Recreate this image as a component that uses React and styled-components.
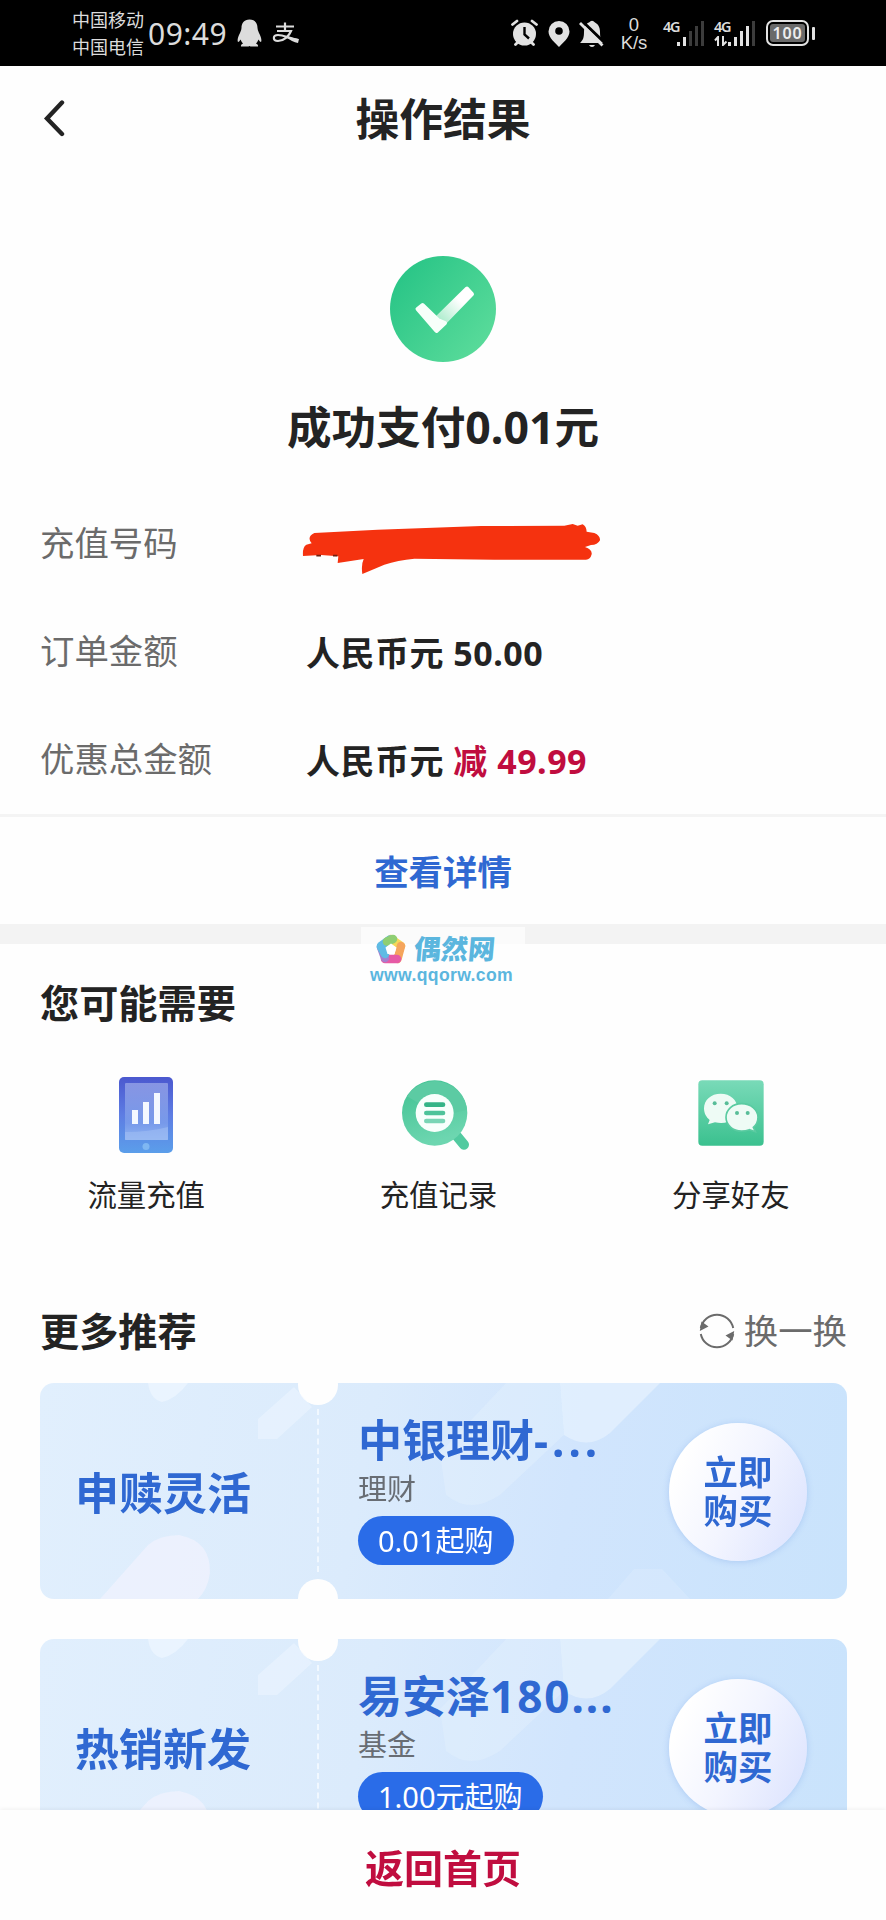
import React from "react";
import styled, { createGlobalStyle, css } from "styled-components";

const blue = "#2f68d2";
const red = "#c00d3f";
const dark = "#232323";
const gray = "#6b6b6b";

const GlobalStyle = createGlobalStyle`
  * {
    box-sizing: border-box;
  }

  body {
    margin: 0;
    background: #fff;
    font-family: "Noto Sans", "Noto Sans CJK SC", sans-serif;
  }

  svg {
    display: block;
    flex: none;
  }

  h1, h2, p {
    margin: 0;
  }

  button {
    font-family: inherit;
    border: none;
    padding: 0;
    background: none;
  }
`;

const Page = styled.div`
  display: flex;
  flex-direction: column;
  width: 886px;
  height: 1920px;
  overflow: hidden;
  background: #fefefe;
  color: ${dark};
`;

const StatusBar = styled.div`
  display: flex;
  justify-content: space-between;
  align-items: center;
  height: 66px;
  flex: none;
  padding: 0 71px 0 72px;
  background: #000;
  color: #dcdcdc;
`;

const StatusGroup = styled.div`
  display: flex;
  align-items: center;
`;

const Carriers = styled.div`
  width: 76px;
  font-size: 18px;
  line-height: 27px;
  padding-top: 1px;
  white-space: nowrap;
`;

const Clock = styled.div`
  width: 89px;
  font-size: 30px;
  line-height: 40px;
  padding-top: 2px;
  letter-spacing: 0.5px;
`;

const AppIcons = styled.div`
  display: flex;
  align-items: center;
  gap: 10px;
`;

const Header = styled.header`
  display: grid;
  grid-template-columns: 1fr auto 1fr;
  align-items: center;
  height: 106px;
  flex: none;
  padding: 0 43px;
`;

const Title = styled.h1`
  font-size: 43.8px;
  line-height: 60px;
  font-weight: 700;
`;

const Result = styled.section`
  display: flex;
  flex-direction: column;
  align-items: center;
  gap: 35px;
  padding: 84px 0 32px;
`;

const ResultText = styled.p`
  font-size: 44.6px;
  line-height: 60px;
  font-weight: 700;
`;

const Row = styled.div`
  display: grid;
  grid-template-columns: 266px 1fr;
  align-items: center;
  height: 108px;
  flex: none;
  padding-left: 40px;
  font-size: 34.4px;
  line-height: 48px;
`;

const Label = styled.div`
  color: ${gray};
`;

const Value = styled.div`
  font-weight: 700;
  font-size: 34px;
  padding-top: 3px;
  letter-spacing: 0.5px;

  span {
    color: ${red};
  }
`;

const Redacted = styled.div`
  margin-left: -5px;
  padding-top: 12px;
`;

const DetailLink = styled.button`
  height: 110px;
  margin-top: 1px;
  padding-top: 3px;
  flex: none;
  border-top: 3px solid #f4f4f4;
  color: ${blue};
  font-size: 34.4px;
  line-height: 48px;
  font-weight: 600;
`;

const Band = styled.div`
  position: relative;
  height: 20px;
  flex: none;
  background: #f3f3f3;
`;

const SiteMark = styled.div`
  position: absolute;
  z-index: 1;
  top: 3px;
  left: 361px;
  width: 164px;
  height: 64px;
  background: rgba(254, 254, 254, 0.75);
  color: #5bb6de;
`;

const SiteName = styled.div`
  display: flex;
  align-items: center;
  gap: 8px;
  height: 37px;
  padding: 7px 0 0 15px;
  font-size: 27px;
  line-height: 30px;
  font-weight: 900;

  span {
    transform: skewX(-5deg);
  }
`;

const SiteUrl = styled.div`
  padding-left: 9px;
  font-family: "Liberation Sans", sans-serif;
  font-size: 17.6px;
  line-height: 22px;
  font-weight: 700;
  letter-spacing: 0.35px;
`;

const SectionHead = styled.div`
  display: flex;
  justify-content: space-between;
  align-items: center;
  height: 60px;
  flex: none;
  margin-top: ${({ $top }) => $top}px;
  padding: 0 39px 0 40px;
`;

const SectionTitle = styled.h2`
  font-size: 39.2px;
  line-height: 60px;
  font-weight: 700;
`;

const Shuffle = styled.button`
  display: flex;
  align-items: center;
  gap: 9px;
  color: ${gray};
  font-size: 34.4px;
  line-height: 48px;
`;

const Shortcuts = styled.div`
  display: grid;
  grid-template-columns: repeat(3, 1fr);
  flex: none;
  padding: 42px 9px 0 0;
`;

const Shortcut = styled.div`
  display: flex;
  flex-direction: column;
  align-items: center;
  gap: 20px;
  font-size: 29.4px;
  line-height: 40px;
`;

const IconBox = styled.div`
  display: flex;
  align-items: center;
  height: 80px;
  padding: 0 ${({ $right }) => $right}px ${({ $bottom }) => $bottom}px 0;
`;

const Cards = styled.div`
  display: flex;
  flex-direction: column;
  gap: 40px;
  flex: 1;
  min-height: 0;
  overflow: hidden;
  padding: 22px 39px 0 40px;
`;

const notch = css`
  content: "";
  position: absolute;
  left: 258px;
  width: 40px;
  height: 40px;
  border-radius: 50%;
  background: #fefefe;
`;

const Card = styled.article`
  position: relative;
  display: flex;
  height: 216px;
  flex: none;
  border-radius: 14px;
  overflow: hidden;
  background: linear-gradient(100deg, #e1effd 0%, #dbebfc 40%, #d1e5fd 65%, #c9e3fc 100%);

  &::before {
    ${notch};
    top: -18px;
  }

  &::after {
    ${notch};
    bottom: -20px;
  }
`;

const Shapes = styled.svg`
  position: absolute;
  inset: 0;
`;

const Slogan = styled.div`
  position: relative;
  display: flex;
  align-items: center;
  width: 279px;
  margin: 26px 0 27px;
  padding: 1px 0 0 35px;
  border-right: 2px dashed #f1f8ff;
  color: ${blue};
  font-size: 44px;
  font-weight: 700;
`;

const Product = styled.div`
  position: relative;
  flex: 1;
  padding: 27px 0 0 39px;
`;

const ProductName = styled.div`
  color: ${blue};
  font-size: 44px;
  line-height: 60px;
  font-weight: 700;
  white-space: nowrap;

  span {
    letter-spacing: ${({ $spacing }) => $spacing}px;
  }
`;

const ProductType = styled.div`
  color: #686d74;
  font-size: 29px;
  line-height: 38px;
`;

const Pill = styled.div`
  display: inline-flex;
  align-items: center;
  height: 49px;
  margin-top: 8px;
  padding: 0 20px;
  border-radius: 25px;
  background: #2a6ce8;
  color: #fff;
  font-size: 29px;
  line-height: 49px;
`;

const BuyButton = styled.button`
  position: relative;
  align-self: center;
  width: 138px;
  height: 138px;
  margin: 2px 40px 0 0;
  padding: 0 34px 3px;
  border-radius: 50%;
  background: linear-gradient(115deg, #fff 15%, #f3f5ff 50%, #dce3fe 95%);
  box-shadow: 0 1px 6px rgba(80, 130, 220, 0.25);
  color: ${blue};
  font-size: 34.4px;
  line-height: 39px;
  font-weight: 600;
`;

const Footer = styled.footer`
  display: flex;
  justify-content: center;
  align-items: center;
  height: 110px;
  flex: none;
  padding-top: 5px;
  background: #fefefe;
  box-shadow: 0 -1px 4px rgba(0, 0, 0, 0.06);
  z-index: 1;
  color: ${red};
  font-size: 39px;
  line-height: 54px;
  font-weight: 700;
`;

const PenguinIcon = () => (
  <svg width="25" height="28" viewBox="0 0 25 28" fill="#dcdcdc">
    <path d="M12.500 0.500C7 0.500 4.500 4.500 4.500 9Q4.500 11 3 14C1 18 0 21 1 23Q2 23 3.500 20.500Q4.500 23 6 24.500Q3.500 25.500 4 27.500H11.500L12.500 27L13.500 27.500H21Q21.500 25.500 19 24.500Q20.500 23 21.500 20.500Q23 23 24 23C25 21 24 18 22 14Q20.500 11 20.500 9C20.500 4.500 18 0.500 12.500 0.500Z" />
  </svg>
);

const AlipayIcon = () => (
  <svg width="28" height="22" viewBox="0 0 28 22" fill="none" stroke="#dcdcdc" strokeWidth="2.2">
    <path d="M4 4.500H22M13 0.500V9M5 9H19C17 14 12 19 6 19C0.500 19 0.500 13 6 13C12 13 17 16.500 26 18" />
    <path d="M14 14Q20 16 27 17L26 21Q20 20 14 15Z" fill="#dcdcdc" stroke="none" />
  </svg>
);

// alarm, location, muted bell
const NoticeIcons = () => (
  <svg width="100" height="36" viewBox="0 0 100 36" fill="#e2e2e2">
    <circle cx="13.500" cy="19" r="11.500" />
    <path d="M1.500 9.500L6 6M21 6L25.500 9.500M4.500 29.500L8 26M22.500 29.500L19 26" stroke="#e2e2e2" strokeWidth="2.800" strokeLinecap="round" />
    <path d="M13.500 12V19.500L18 23.500" fill="none" stroke="#000" strokeWidth="2.400" />
    <path d="M48 6A10.500 10.500 0 0 0 37.500 16.500C37.500 23 44.500 28 48 32C51.500 28 58.500 23 58.500 16.500A10.500 10.500 0 0 0 48 6Z" />
    <circle cx="48" cy="16" r="3.800" fill="#000" />
    <path d="M69 28C72 25 73 23 73 17C73 11 76 8 78 7.500Q81 4 84 7.500C87 9 89 12 89 17C89 23 90 25 93 28Z" />
    <path d="M78 30H84Q83 32 81 32Q79 32 78 30Z" />
    <path d="M70 5L95 29" stroke="#000" strokeWidth="3" />
    <path d="M69 8L91.500 30.500" stroke="#e2e2e2" strokeWidth="2.800" />
  </svg>
);

const Speed = styled.div`
  display: flex;
  flex-direction: column;
  align-items: center;
  width: 44px;
  margin: 2px 7px 0 1px;
  font-family: "Liberation Sans", sans-serif;
  font-size: 18.5px;
  line-height: 18px;
`;

const NetworkType = styled.div`
  height: 12px;
  font-size: 14.5px;
  line-height: 12px;
  font-weight: 600;
  letter-spacing: -1.2px;
`;

const Signal = styled.div`
  display: flex;
  width: 50px;
  height: 26px;
  margin-right: 1px;
`;

const NetworkColumn = styled.div`
  display: flex;
  flex-direction: column;
  justify-content: space-between;
  width: 14px;
`;

const Bars = styled.div`
  display: flex;
  align-items: flex-end;
  gap: 3px;
  height: 26px;
`;

const Bar = styled.div`
  width: 3px;
  height: ${({ $height }) => $height}px;
  background: ${({ $on }) => ($on ? "#e2e2e2" : "#3c3c3c")};
`;

const Battery = styled.div`
  display: flex;
  align-items: center;
  gap: 3px;
  margin-left: 1px;

  &::after {
    content: "";
    width: 3px;
    height: 13px;
    border-radius: 1px;
    background: #e2e2e2;
  }
`;

const BatteryCell = styled.div`
  width: 43px;
  height: 26px;
  border: 2px solid #e2e2e2;
  border-radius: 7px;
  padding: 2px;
`;

const BatteryLevel = styled.div`
  height: 18px;
  border-radius: 3px;
  background: #6a6a6a;
  color: #ededed;
  font-size: 16px;
  line-height: 18px;
  font-weight: 600;
  letter-spacing: 0.8px;
  text-align: center;
`;

const TransferIcon = () => (
  <svg width="14" height="10" viewBox="0 0 14 10" fill="none" stroke="#e2e2e2" strokeWidth="2">
    <path d="M1 4.500L4 1V10M9 0V9L12.500 5.500" />
  </svg>
);

const BackIcon = () => (
  <svg width="22" height="40" viewBox="0 0 22 40" fill="none">
    <path d="M19 3.500L4 19.500L19 35" stroke={dark} strokeWidth="4.400" strokeLinecap="round" />
  </svg>
);

const SuccessIcon = () => (
  <svg width="106" height="106" viewBox="0 0 106 106">
    <defs>
      <linearGradient id="success" x1="0" y1="0.100" x2="1" y2="0.900">
        <stop offset="0" stopColor="#25c385" />
        <stop offset="1" stopColor="#5edd9c" />
      </linearGradient>
      <linearGradient id="tick" x1="48" y1="66" x2="72" y2="42" gradientUnits="userSpaceOnUse">
        <stop offset="0" stopColor="#a5ebc8" />
        <stop offset="0.900" stopColor="#fff" />
      </linearGradient>
    </defs>
    <circle cx="53" cy="53" r="53" fill="url(#success)" />
    <g strokeWidth="4" strokeLinejoin="round">
      <path d="M47 62L77 32.500L82 38L53 68Z" fill="url(#tick)" stroke="url(#tick)" />
      <path d="M27.500 53L32.500 49L48 64L55 67L46.500 75Z" fill="#f7fffa" stroke="#f7fffa" />
    </g>
  </svg>
);

const Scribble = () => (
  <svg width="300" height="52" viewBox="120 850 900 156">
    <path
      d="M160 880L350 870L660 859L910 858L935 853L950 858L965 854Q976 860 977 876L1000 880Q1018 888 1017 902Q1010 916 990 916L972 922Q994 930 992 944Q988 960 975 960H700L460 957Q410 962 370 975L304 1003Q300 975 308 958L230 970L232 950L180 946L126 949Q124 922 136 915L152 911Q136 892 160 880Z"
      fill="#f5320f"
    />
    <path d="M166 948h14M216 948h13" stroke="#702010" strokeWidth="5" />
  </svg>
);

const PentagonLogo = () => (
  <svg width="30" height="30" viewBox="0 0 30 30" fill="none" strokeWidth="8.5" strokeLinecap="round">
    <path d="M15 5L25 12" stroke="#f5d858" />
    <path d="M25 12L21.500 25" stroke="#f5a55c" />
    <path d="M21 25H9" stroke="#e65aa5" />
    <path d="M9 24L5 13" stroke="#a57fce" />
    <path d="M5 13L9 20" stroke="#5fbbe4" />
    <path d="M5 12L14 5.500" stroke="#5fbbe4" />
    <path d="M11 7.500L17 5" stroke="#8fce72" />
    <path d="M15 9.500L20.500 13.500L18.500 20H11.500L9.500 13.500Z" fill="#fff" />
  </svg>
);

const PhoneIcon = () => (
  <svg width="54" height="76" viewBox="0 0 54 76">
    <defs>
      <linearGradient id="phone" x1="0" y1="0" x2="0" y2="1">
        <stop offset="0" stopColor="#4b58cf" />
        <stop offset="0.500" stopColor="#5e7de3" />
        <stop offset="1" stopColor="#5b9eea" />
      </linearGradient>
      <linearGradient id="screen" x1="0" y1="0" x2="0" y2="1">
        <stop offset="0" stopColor="#8795e3" />
        <stop offset="0.700" stopColor="#7799ea" />
        <stop offset="1" stopColor="#8eb4f1" />
      </linearGradient>
    </defs>
    <rect width="54" height="76" rx="5" fill="url(#phone)" />
    <rect x="6" y="6" width="43" height="57" rx="1" fill="url(#screen)" />
    <path d="M6 55Q30 55 49 50V63H6Z" fill="#9fbdf3" opacity="0.600" />
    <path d="M13 33h6v14h-6zM24 25h6v22h-6zM35 16h6v31h-6z" fill="#f4f8ff" />
    <circle cx="27" cy="69.500" r="3.500" fill="#7fb7f2" />
  </svg>
);

const RecordIcon = () => (
  <svg width="70" height="72" viewBox="60 86 210 216">
    <defs>
      <linearGradient id="lens" x1="0" y1="0" x2="0.300" y2="1">
        <stop offset="0" stopColor="#3fc191" />
        <stop offset="1" stopColor="#6dd6b0" />
      </linearGradient>
    </defs>
    <path d="M228 258L249 283" stroke="#52caa0" strokeWidth="30" strokeLinecap="round" />
    <circle cx="161" cy="188" r="98" fill="url(#lens)" />
    <path d="M78 138A98 98 0 0 1 258 178L218 188A57 57 0 0 0 112 158Z" fill="#5ccba3" />
    <circle cx="161" cy="188" r="57" fill="#f8fffc" />
    <g strokeWidth="14" strokeLinecap="round">
      <path d="M136 163H186" stroke="#35b487" />
      <path d="M136 188H186" stroke="#4ec39a" />
      <path d="M136 212H186" stroke="#79d5b5" />
    </g>
  </svg>
);

const WechatIcon = () => (
  <svg width="66" height="66" viewBox="954 89 198 198">
    <defs>
      <linearGradient id="wechat" x1="0" y1="0" x2="0" y2="1">
        <stop offset="0" stopColor="#79dab8" />
        <stop offset="1" stopColor="#3bc18f" />
      </linearGradient>
    </defs>
    <rect x="955" y="90" width="196" height="196" rx="12" fill="url(#wechat)" />
    <path d="M1022 130C993 130 972 149 972 174C972 189 979 201 989 209L984 222L1005 216C1048 226 1072 200 1072 174C1072 149 1051 130 1022 130Z" fill="#eefbf5" />
    <path d="M1085 160C1058 160 1038 178 1038 201C1038 224 1058 242 1085 242Q1097 242 1108 238L1126 244L1120 231C1129 224 1134 213 1134 201C1134 178 1112 160 1085 160Z" fill="#eefbf5" stroke="#5acba1" strokeWidth="5" />
    <g fill="#58bd98">
      <circle cx="1004" cy="159" r="6" />
      <circle cx="1040" cy="159" r="6" />
      <circle cx="1071" cy="188" r="6" />
      <circle cx="1103" cy="188" r="6" />
    </g>
  </svg>
);

const ShuffleIcon = () => (
  <svg width="36" height="36" viewBox="0 0 36 36" fill="none" stroke={gray} strokeWidth="2">
    <path d="M1.800 15A16.500 16.500 0 0 1 34.200 15M34.200 21A16.500 16.500 0 0 1 1.800 21" />
    <path d="M0.800 18L2.500 8.500L9.500 13.500ZM35.200 18L33.500 27.500L26.500 22.500Z" fill={gray} stroke="none" />
  </svg>
);

const CardShapes = () => (
  <Shapes width="807" height="216" viewBox="0 0 807 216">
    <g fill="#eef6ff" opacity="0.750">
      <path d="M108 0H148Q136 16 122 19Q110 16 108 0Z" />
      <path d="M218 36L254 4L272 24L237 56H218Z" opacity="0.700" />
      <path d="M60 216L108 162Q120 152 139 152Q171 158 170 190Q168 206 158 216Z" fill="#f0f2fe" />
    </g>
    <g fill="#e7f3fe" opacity="0.700">
      <path d="M466 0H520L524 52L460 112Q430 132 406 112L400 70Z" opacity="0.500" />
      <path d="M520 0H620L570 50Q548 68 524 52Z" />
      <path d="M568 216L594 186H622L650 216Z" opacity="0.400" />
    </g>
  </Shapes>
);

const signals = [
  { id: "sim1", strength: 2 },
  { id: "sim2", strength: 4, transfer: true },
];

const shortcuts = [
  { label: "流量充值", Icon: PhoneIcon },
  { label: "充值记录", Icon: RecordIcon, right: 5 },
  { label: "分享好友", Icon: WechatIcon, bottom: 5 },
];

const products = [
  { slogan: "申赎灵活", name: "中银理财", tail: "-...", spacing: 4, type: "理财", price: "0.01起购" },
  { slogan: "热销新发", name: "易安泽", tail: "180...", spacing: 2, type: "基金", price: "1.00元起购" },
];

const App = () => {
  return (
    <>
      <GlobalStyle />
      <Page>
        <StatusBar>
          <StatusGroup>
            <Carriers>
              中国移动
              <br />
              中国电信
            </Carriers>
            <Clock>09:49</Clock>
            <AppIcons>
              <PenguinIcon />
              <AlipayIcon />
            </AppIcons>
          </StatusGroup>
          <StatusGroup>
            <NoticeIcons />
            <Speed>
              <span>0</span>
              <span>K/s</span>
            </Speed>
            {signals.map(({ id, strength, transfer }) => (
              <Signal key={id}>
                <NetworkColumn>
                  <NetworkType>4G</NetworkType>
                  {transfer && <TransferIcon />}
                </NetworkColumn>
                <Bars>
                  {[4, 9, 15, 20, 25].map((height, i) => (
                    <Bar key={height} $height={height} $on={i < strength} />
                  ))}
                </Bars>
              </Signal>
            ))}
            <Battery>
              <BatteryCell>
                <BatteryLevel>100</BatteryLevel>
              </BatteryCell>
            </Battery>
          </StatusGroup>
        </StatusBar>
        <Header>
          <BackIcon />
          <Title>操作结果</Title>
        </Header>
        <Result>
          <SuccessIcon />
          <ResultText>成功支付0.01元</ResultText>
        </Result>
        <Row>
          <Label>充值号码</Label>
          <Redacted>
            <Scribble />
          </Redacted>
        </Row>
        <Row>
          <Label>订单金额</Label>
          <Value>人民币元 50.00</Value>
        </Row>
        <Row>
          <Label>优惠总金额</Label>
          <Value>
            人民币元 <span>减 49.99</span>
          </Value>
        </Row>
        <DetailLink>查看详情</DetailLink>
        <Band>
          <SiteMark>
            <SiteName>
              <PentagonLogo />
              <span>偶然网</span>
            </SiteName>
            <SiteUrl>www.qqorw.com</SiteUrl>
          </SiteMark>
        </Band>
        <SectionHead $top={29}>
          <SectionTitle>您可能需要</SectionTitle>
        </SectionHead>
        <Shortcuts>
          {shortcuts.map(({ label, Icon, right = 0, bottom = 0 }) => (
            <Shortcut key={label}>
              <IconBox $right={right} $bottom={bottom}>
                <Icon />
              </IconBox>
              {label}
            </Shortcut>
          ))}
        </Shortcuts>
        <SectionHead $top={86}>
          <SectionTitle>更多推荐</SectionTitle>
          <Shuffle>
            <ShuffleIcon />
            换一换
          </Shuffle>
        </SectionHead>
        <Cards>
          {products.map(({ slogan, name, tail, spacing, type, price }) => (
            <Card key={slogan}>
              <CardShapes />
              <Slogan>{slogan}</Slogan>
              <Product>
                <ProductName $spacing={spacing}>
                  {name}
                  <span>{tail}</span>
                </ProductName>
                <ProductType>{type}</ProductType>
                <Pill>{price}</Pill>
              </Product>
              <BuyButton>立即购买</BuyButton>
            </Card>
          ))}
        </Cards>
        <Footer>返回首页</Footer>
      </Page>
    </>
  );
};

export default App;
